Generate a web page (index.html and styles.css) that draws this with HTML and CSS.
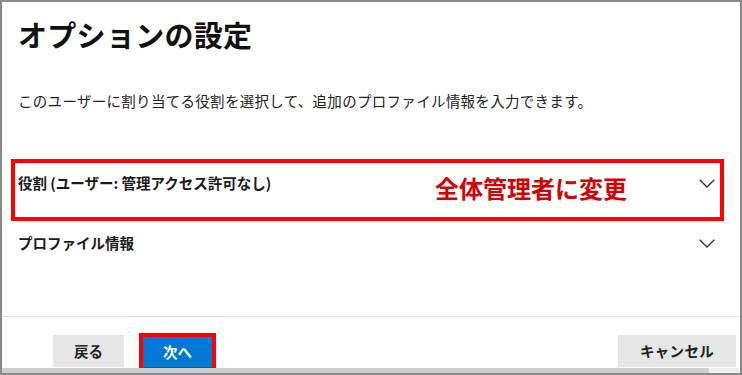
FILE: index.html
```html
<!DOCTYPE html>
<html lang="ja">
<head>
<meta charset="utf-8">
<title>オプションの設定</title>
<link rel="stylesheet" href="styles.css">
</head>
<body>
<div class="window">
  <main class="content">
    <h1 class="title">オプションの設定</h1>
    <p class="desc">このユーザーに割り当てる役割を選択して、追加のプロファイル情報を入力できます。</p>
    <div class="sections">
      <div class="row row-marked">
        <span class="row-label">役割 (ユーザー: 管理アクセス許可なし)</span>
        <svg class="chev" width="16" height="9" viewBox="0 0 16 9"><polyline points="0.7,0.7 8,8 15.3,0.7" fill="none" stroke="#333" stroke-width="1.3"/></svg>
        <span class="mark-box"></span>
        <span class="mark-text">全体管理者に変更</span>
      </div>
      <div class="row">
        <span class="row-label">プロファイル情報</span>
        <svg class="chev" width="16" height="9" viewBox="0 0 16 9"><polyline points="0.7,0.7 8,8 15.3,0.7" fill="none" stroke="#333" stroke-width="1.3"/></svg>
      </div>
    </div>
  </main>
  <footer class="footer">
    <div class="btn-group">
      <button class="btn btn-gray">戻る</button>
      <span class="mark-wrap"><button class="btn btn-blue">次へ</button></span>
    </div>
    <button class="btn btn-gray btn-cancel">キャンセル</button>
  </footer>
  <div class="hscroll">
    <div class="hscroll-thumb"></div>
    <div class="hscroll-corner"></div>
  </div>
</div>
</body>
</html>
```

FILE: styles.css
```css
* { box-sizing: border-box; }
html, body { margin: 0; padding: 0; background: #fff; }
body {
  font-family: "Noto Sans CJK JP", "Noto Sans", sans-serif;
  color: #1b1b1b;
}
.window {
  width: 742px;
  height: 375px;
  border: 2px solid #8a8a8a;
  display: flex;
  flex-direction: column;
  overflow: hidden;
}
.content {
  flex: 1;
  padding: 14px 16px 0 16px;
}
.title {
  margin: 0;
  font-size: 29px;
  line-height: 36px;
  font-weight: 700;
  color: #111;
  letter-spacing: 0.3px;
}
.desc {
  margin: 39px 0 0 0;
  font-size: 14.5px;
  line-height: 20px;
  color: #222;
  letter-spacing: 0.3px;
}
.sections { margin-top: 49px; }
.row {
  position: relative;
  height: 60px;
  padding-top: 13px;
  display: flex;
  align-items: flex-start;
  justify-content: space-between;
}
.row-label {
  font-size: 14.5px;
  line-height: 20px;
  font-weight: 700;
  color: #1b1b1b;
}
.chev { margin: 6px 9px 0 0; }
.mark-box {
  position: absolute;
  left: -7px;
  top: -1px;
  right: 0;
  bottom: -1px;
  border: 4px solid #ff0000;
}
.mark-text {
  position: absolute;
  left: 417px;
  top: 13px;
  font-size: 24px;
  line-height: 30px;
  font-weight: 700;
  color: #d40000;
}
.footer {
  height: 52px;
  flex: none;
  border-top: 1px solid #e1e1e1;
  padding: 18px 4px 0 51px;
  display: flex;
  justify-content: space-between;
  align-items: flex-start;
  overflow: hidden;
}
.btn-group { display: flex; align-items: flex-start; }
.btn {
  font-family: inherit;
  font-size: 14.5px;
  font-weight: 700;
  height: 32px;
  padding: 0 21px;
  border: none;
  border-radius: 0;
  color: #222;
  line-height: 32px;
}
.btn-gray { background: #e6e6e6; }
.btn-cancel { padding: 0 22px; letter-spacing: 0.3px; }
.mark-wrap {
  margin: -2px 0 0 15px;
  border: 4px solid #ff0000;
  display: flex;
}
.btn-blue {
  background: #0078d4;
  color: #fff;
  width: 69px;
  height: 30px;
  line-height: 28px;
  padding: 0;
}
.hscroll {
  height: 5px;
  flex: none;
  display: flex;
  background: #f0f0f0;
}
.hscroll-thumb { width: 707px; background: #cdcdcd; }
.hscroll-corner { flex: 1; }
```
